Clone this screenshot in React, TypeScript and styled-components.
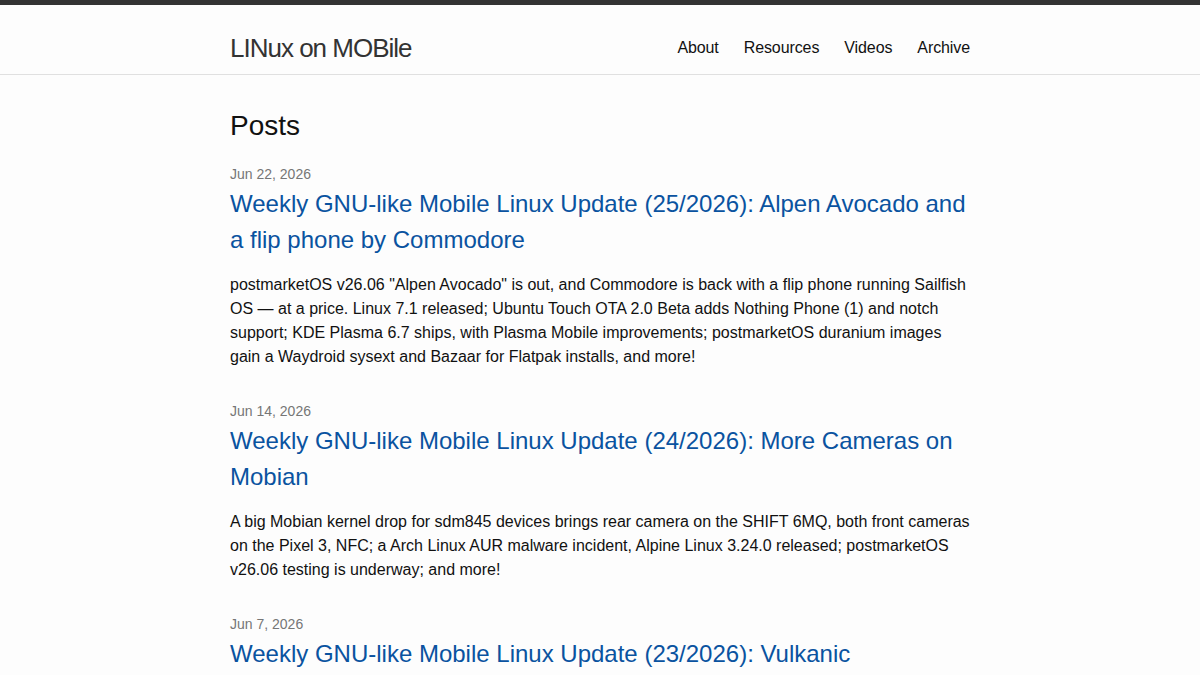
import React from "react";
import styled, { createGlobalStyle } from "styled-components";

const GlobalStyle = createGlobalStyle`
  html, body {
    margin: 0;
    padding: 0;
    background: #fdfdfd;
  }
  body {
    font-family: "Liberation Sans", Arial, Helvetica, sans-serif;
    font-size: 16px;
    line-height: 1.5;
    color: #111;
  }
`;

const Wrapper = styled.div`
  max-width: 740px;
  margin: 0 auto;
`;

const SiteHeader = styled.header`
  border-top: 5px solid #333;
  border-bottom: 1px solid #e0e0e0;
`;

const HeaderBar = styled(Wrapper)`
  display: flex;
  align-items: center;
  justify-content: space-between;
  box-sizing: border-box;
  height: 69px;
  padding-top: 15px;
`;

const SiteTitle = styled.a`
  font-size: 26px;
  letter-spacing: -1px;
  color: #333;
  text-decoration: none;
  line-height: 1;
  padding-top: 1px;
`;

const Nav = styled.nav`
  display: flex;
  gap: 25px;
  padding-top: 2px;
`;

const NavLink = styled.a`
  color: #111;
  text-decoration: none;
  font-size: 16px;
  letter-spacing: -0.1px;
`;

const Main = styled(Wrapper)`
  padding-top: 30px;
`;

const Heading = styled.h1`
  font-size: 28px;
  font-weight: normal;
  line-height: 42px;
  margin: 0 0 17px;
`;

const PostList = styled.ul`
  list-style: none;
  margin: 0;
  padding: 0;
`;

const PostItem = styled.li`
  margin-bottom: 32px;
`;

const PostDate = styled.span`
  display: block;
  font-size: 14px;
  line-height: 21px;
  color: #767676;
`;

const PostTitle = styled.h3`
  font-size: 24px;
  font-weight: normal;
  line-height: 36px;
  margin: 1px 0 15px;
`;

const PostLink = styled.a`
  color: #0a53a0;
  text-decoration: none;
`;

const Excerpt = styled.p`
  margin: 0;
  line-height: 24px;
`;

const posts = [
  {
    date: "Jun 22, 2026",
    title:
      "Weekly GNU-like Mobile Linux Update (25/2026): Alpen Avocado and a flip phone by Commodore",
    excerpt:
      'postmarketOS v26.06 "Alpen Avocado" is out, and Commodore is back with a flip phone running Sailfish OS \u2014 at a price. Linux 7.1 released; Ubuntu Touch OTA 2.0 Beta adds Nothing Phone (1) and notch support; KDE Plasma 6.7 ships, with Plasma Mobile improvements; postmarketOS duranium images gain a Waydroid sysext and Bazaar for Flatpak installs, and more!',
  },
  {
    date: "Jun 14, 2026",
    title: "Weekly GNU-like Mobile Linux Update (24/2026): More Cameras on Mobian",
    excerpt:
      "A big Mobian kernel drop for sdm845 devices brings rear camera on the SHIFT 6MQ, both front cameras on the Pixel 3, NFC; a Arch Linux AUR malware incident, Alpine Linux 3.24.0 released; postmarketOS v26.06 testing is underway; and more!",
  },
  {
    date: "Jun 7, 2026",
    title: "Weekly GNU-like Mobile Linux Update (23/2026): Vulkanic",
    excerpt: "",
  },
];

export default function App() {
  return (
    <>
      <GlobalStyle />
      <SiteHeader>
        <HeaderBar>
          <SiteTitle href="#">LINux on MOBile</SiteTitle>
          <Nav>
            <NavLink href="#">About</NavLink>
            <NavLink href="#">Resources</NavLink>
            <NavLink href="#">Videos</NavLink>
            <NavLink href="#">Archive</NavLink>
          </Nav>
        </HeaderBar>
      </SiteHeader>
      <Main as="main">
        <Heading>Posts</Heading>
        <PostList>
          {posts.map((post) => (
            <PostItem key={post.date}>
              <PostDate>{post.date}</PostDate>
              <PostTitle>
                <PostLink href="#">{post.title}</PostLink>
              </PostTitle>
              {post.excerpt && <Excerpt>{post.excerpt}</Excerpt>}
            </PostItem>
          ))}
        </PostList>
      </Main>
    </>
  );
}
